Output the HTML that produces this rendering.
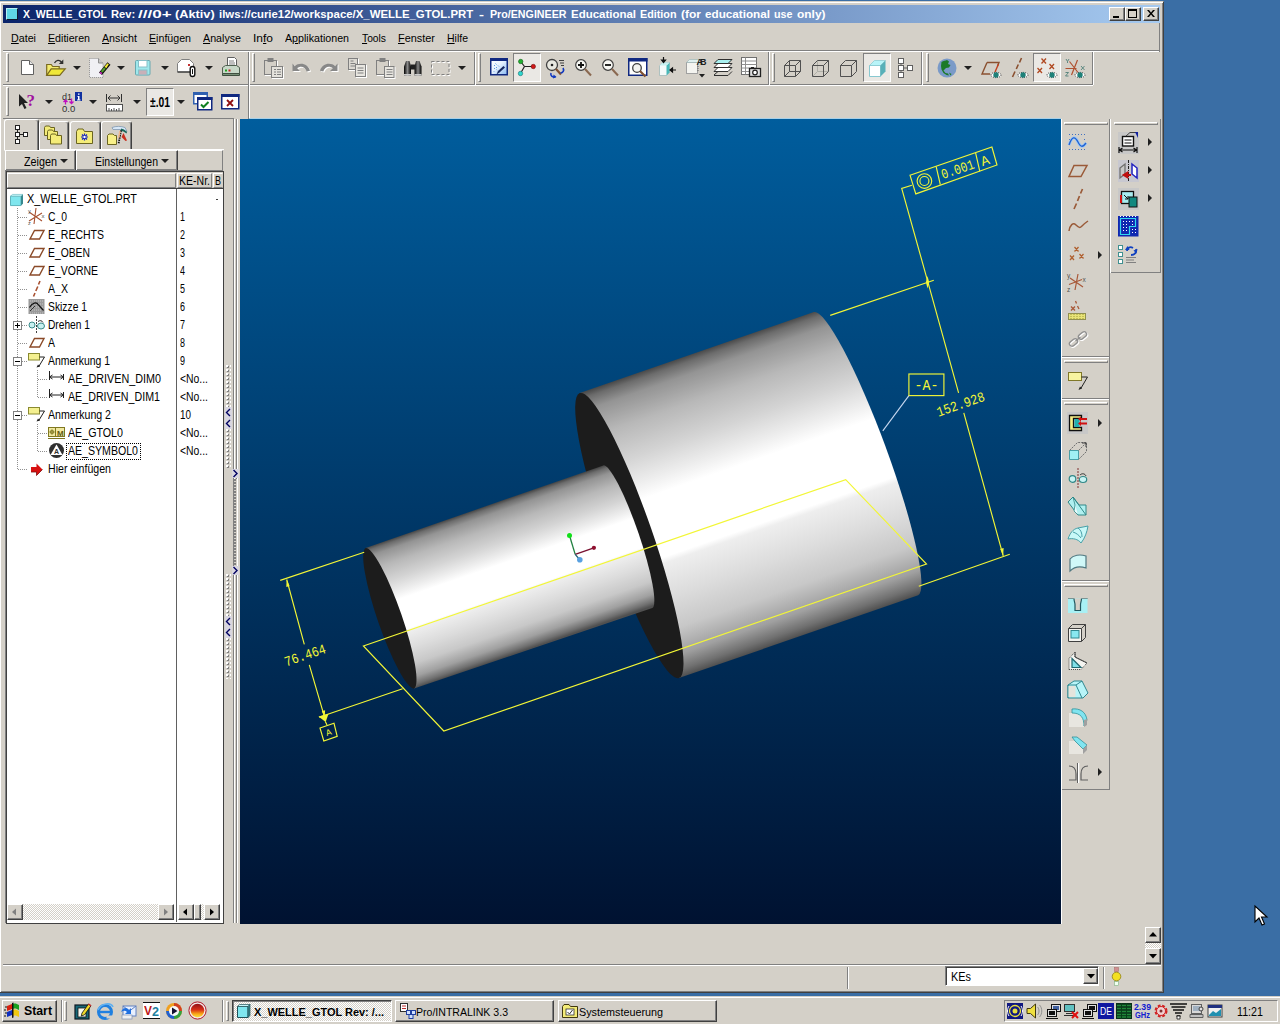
<!DOCTYPE html>
<html><head><meta charset="utf-8">
<style>
*{box-sizing:border-box;margin:0;padding:0}
html,body{width:1280px;height:1024px;overflow:hidden}
body{background:#3A6EA5;font-family:"Liberation Sans",sans-serif;font-size:11px;color:#000;position:relative}
.a{position:absolute}
.face{background:#D4D0C8}
.t{position:absolute;white-space:nowrap;line-height:14px;height:14px;transform-origin:0 50%}
.raised{border:1px solid;border-color:#fff #808080 #808080 #fff}
.sunken{border:1px solid;border-color:#808080 #fff #fff #808080}
.btn{position:absolute;background:#D4D0C8;border:1px solid;border-color:#fff #404040 #404040 #fff;box-shadow:inset -1px -1px 0 #808080}
.hl{position:absolute;height:2px;border-top:1px solid #808080;border-bottom:1px solid #fff}
.vl{position:absolute;width:2px;border-left:1px solid #808080;border-right:1px solid #fff}
.grip{position:absolute;width:3px;border:1px solid;border-color:#fff #808080 #808080 #fff}
.dd{position:absolute;width:0;height:0;border-left:4px solid transparent;border-right:4px solid transparent;border-top:4px solid #202020}
.rr{position:absolute;width:0;height:0;border-top:4px solid transparent;border-bottom:4px solid transparent;border-left:4px solid #202020}
svg{position:absolute;overflow:visible}
</style></head>
<body>
<!-- WINDOW FRAME -->
<div class="a face" style="left:-1px;top:1px;width:1165px;height:992px;border:1px solid;border-color:#D4D0C8 #404040 #404040 #D4D0C8;box-shadow:inset 1px 1px 0 #fff,inset -1px -1px 0 #808080"></div>
<!-- TITLE BAR -->
<div class="a" style="left:3px;top:5px;width:1157px;height:18px;background:linear-gradient(90deg,#0A246A 0%,#A6CAF0 100%)"></div>
<div class="a" style="left:6px;top:8px;width:12px;height:12px;background:#5ED6E6;border:1px solid;border-color:#B8F0F4 #10182C #10182C #B8F0F4"></div>
<span class="t" style="left: 22.8px; top: 5px; line-height: 18px; height: 18px; color: rgb(255, 255, 255); font-weight: bold; transform: scaleX(0.95);">X_WELLE_GTOL</span>
<span class="t" style="left: 110.8px; top: 5px; line-height: 18px; height: 18px; color: rgb(255, 255, 255); font-weight: bold; transform: scaleX(1.0149);">Rev:</span>
<span class="t" style="left: 138.4px; top: 5px; line-height: 18px; height: 18px; color: rgb(255, 255, 255); font-weight: bold; transform: scaleX(1.5471);">///0+</span>
<span class="t" style="left: 175.3px; top: 5px; line-height: 18px; height: 18px; color: rgb(255, 255, 255); font-weight: bold; transform: scaleX(1.1597);">(Aktiv)</span>
<span class="t" style="left: 218.8px; top: 5px; line-height: 18px; height: 18px; color: rgb(255, 255, 255); font-weight: bold; transform: scaleX(1.0352);">ilws://curie12/workspace/X_WELLE_GTOL.PRT</span>
<span class="t" style="left: 479px; top: 5px; line-height: 18px; height: 18px; color: rgb(255, 255, 255); font-weight: bold; transform: scaleX(1.3617);">-</span>
<span class="t" style="left: 490px; top: 5px; line-height: 18px; height: 18px; color: rgb(255, 255, 255); font-weight: bold; transform: scaleX(0.9701);">Pro/ENGINEER</span>
<span class="t" style="left: 571px; top: 5px; line-height: 18px; height: 18px; color: rgb(255, 255, 255); font-weight: bold; transform: scaleX(1.0426);">Educational</span>
<span class="t" style="left: 640px; top: 5px; line-height: 18px; height: 18px; color: rgb(255, 255, 255); font-weight: bold; transform: scaleX(0.979);">Edition</span>
<span class="t" style="left: 681px; top: 5px; line-height: 18px; height: 18px; color: rgb(255, 255, 255); font-weight: bold; transform: scaleX(1.0912);">(for</span>
<span class="t" style="left: 705px; top: 5px; line-height: 18px; height: 18px; color: rgb(255, 255, 255); font-weight: bold; transform: scaleX(1.0634);">educational</span>
<span class="t" style="left: 774px; top: 5px; line-height: 18px; height: 18px; color: rgb(255, 255, 255); font-weight: bold; transform: scaleX(0.9753);">use</span>
<span class="t" style="left: 796.5px; top: 5px; line-height: 18px; height: 18px; color: rgb(255, 255, 255); font-weight: bold; transform: scaleX(1.0844);">only)</span>

<!-- title buttons -->
<div class="btn" style="left:1109px;top:7px;width:16px;height:14px"><div class="a" style="left:3px;top:8px;width:6px;height:2px;background:#000"></div></div>
<div class="btn" style="left:1125px;top:7px;width:16px;height:14px"><div class="a" style="left:2px;top:1px;width:9px;height:9px;border:1px solid #000;border-top-width:2px"></div></div>
<div class="btn" style="left:1143px;top:7px;width:16px;height:14px"><svg style="left:3px;top:2px" width="8" height="7"><path d="M0 0h2l2 2.5 2-2.5h2l-3 3.5 3 3.5h-2l-2-2.5-2 2.5h-2l3-3.5z" fill="#000"></path></svg></div>
<!-- MENU BAR -->
<span class="t" style="left: 11px; top: 31px; transform: scaleX(0.9726);"><u>D</u>atei</span>
<span class="t" style="left: 48px; top: 31px; transform: scaleX(0.9673);"><u>E</u>ditieren</span>
<span class="t" style="left: 102px; top: 31px; transform: scaleX(0.9697);"><u>A</u>nsicht</span>
<span class="t" style="left: 149px; top: 31px; transform: scaleX(0.9669);"><u>E</u>infügen</span>
<span class="t" style="left: 203px; top: 31px; transform: scaleX(0.9709);"><u>A</u>nalyse</span>
<span class="t" style="left: 253px; top: 31px; transform: scaleX(1.0884);">In<u>f</u>o</span>
<span class="t" style="left: 285px; top: 31px; transform: scaleX(0.9688);">A<u>p</u>plikationen</span>
<span class="t" style="left: 362px; top: 31px; transform: scaleX(0.9343);"><u>T</u>ools</span>
<span class="t" style="left: 398px; top: 31px; transform: scaleX(0.9916);"><u>F</u>enster</span>
<span class="t" style="left: 447px; top: 31px; transform: scaleX(0.9539);"><u>H</u>ilfe</span>
<!-- toolbar frame lines -->
<div class="hl" style="left:3px;top:50px;width:1157px"></div>
<div class="a" style="left:1159px;top:23px;width:1px;height:29px;background:#808080"></div>
<div class="hl" style="left:3px;top:84px;width:1090px"></div>
<div class="a" style="left:3px;top:118px;width:231px;height:1px;background:#808080"></div>
<!-- TOOLBAR ROW 1 group 1 -->
<div class="grip" style="left:6px;top:53px;height:29px"></div>
<div class="vl" style="left:248px;top:52px;height:67px"></div>
<!-- new -->
<svg style="left:21px;top:60px" width="13" height="15"><path d="M.5 .5h8l4 4v10h-12z" fill="#fff" stroke="#606060"></path><path d="M8.5 .5v4h4" fill="#e8e8e8" stroke="#606060"></path></svg>
<!-- open -->
<svg style="left:46px;top:58px" width="20" height="19"><path d="M.7 17.300V6.500h4.500l1.500 2h6.500v3" fill="#F4EC70" stroke="#7A6A20" stroke-width="1.200"></path><path d="M.7 17.300l4.500-6.500h14l-5.500 6.500z" fill="#F0E838" stroke="#7A6A20" stroke-width="1.200"></path><path d="M8.500 5c1.500-3 5-3.500 7-.8" fill="none" stroke="#303030" stroke-width="1.300"></path><path d="M17.300 1.500v4.500h-4.500z" fill="#303030"></path></svg>
<div class="dd" style="left:73px;top:66px"></div>
<!-- pencil page -->
<svg style="left:88px;top:57px" width="23" height="22"><path d="M1.500 1.500h9l4.500 4.500v14.500h-13.500z" fill="#F0F0F4" stroke="#909090" stroke-dasharray="1 1"></path><path d="M10.500 1.500v4.500h4.500" fill="#C8C8C8" stroke="#909090"></path><path d="M21.500 7l-2-1.800-8.500 10.300 3 2.500 8.500-10.300z" fill="#101010"></path><path d="M20.800 7.300l-1.300-1.100-3 3.500 1.800 1.500z" fill="#F4EC30"></path><path d="M17.800 11.700l-1.700-1.400-3.200 3.900 1.700 1.400z" fill="#50A030"></path><path d="M14.300 16.100l-1.700-1.400-1.100 1.300 1.700 1.500z" fill="#D030C0"></path></svg>
<div class="dd" style="left:117px;top:66px"></div>
<!-- save -->
<svg style="left:135px;top:60px" width="16" height="16"><rect x=".5" y=".5" width="14.5" height="14.5" rx="1" fill="#9EE8EC" stroke="#68A8B0"></rect><rect x="3.5" y=".5" width="8.5" height="6.5" fill="#fff" stroke="#88C0C8"></rect><rect x="3.5" y="10" width="8.5" height="5" fill="#C8B0B8" stroke="#88C0C8"></rect></svg>
<div class="dd" style="left:161px;top:66px"></div>
<!-- envelope clip -->
<svg style="left:177px;top:58px" width="20" height="20"><path d="M.5 5.5l4-4h8l4 4v8.5h-16z" fill="#fff" stroke="#808080"></path><path d="M.5 14h16" stroke="#404040" stroke-width="1.4"></path><rect x="11" y="6" width="2" height="2" fill="#C03030"></rect><rect x="13.2" y="8.5" width="4.6" height="10" rx="2.3" fill="#fff" stroke="#101010" stroke-width="1.4"></rect><path d="M15.5 11v5" stroke="#101010"></path></svg>
<div class="dd" style="left:205px;top:66px"></div>
<!-- printer -->
<svg style="left:221px;top:57px" width="20" height="20"><path d="M6.5 .5h7l2 2v8h-9z" fill="#fff" stroke="#606060"></path><path d="M8 4h5M8 6h6M8 8h6" stroke="#808080"></path><path d="M1.500 10.500l3-2h11l3 2v6h-17z" fill="#C8D8C8" stroke="#506050"></path><path d="M1.500 16.5h17v2h-17z" fill="#789078" stroke="#405040"></path><rect x="4" y="12.500" width="2" height="2" fill="#20A020"></rect><rect x="7.500" y="12.500" width="2" height="2" fill="#C02020"></rect></svg>
<!-- ROW 2 -->
<div class="grip" style="left:6px;top:87px;height:29px"></div>
<svg style="left:18px;top:93px" width="19" height="17"><path d="M1 1v12.500l3-2.500 2.500 5 2-1-2.500-5h4z" fill="#202020"></path><text x="8.500" y="13" font-family="Liberation Serif" font-weight="bold" font-size="17" fill="#A010A0">?</text></svg>
<div class="dd" style="left:45px;top:100px"></div>
<svg style="left:61px;top:91px" width="22" height="22"><text x="1" y="8.500" font-size="9" font-family="Liberation Sans" fill="#303030">d1</text><text x="1" y="21" font-size="9.500" font-family="Liberation Sans" fill="#303030">0.0</text><path d="M4.500 13.500v-4M2.500 11l2-2 2 2" stroke="#C010C0" stroke-width="1.300" fill="none"></path><path d="M10.500 7.500v5M8.500 10.500l2 2 2-2" stroke="#C010C0" stroke-width="1.300" fill="none"></path><rect x="14" y="1" width="7" height="9" fill="#1030A0"></rect><path d="M17 2.500h1.500v1.300h-1.500zM16.500 5h2v3.500h1v1h-3.500v-1h1v-2.500h-.5z" fill="#fff"></path></svg>
<div class="dd" style="left:89px;top:100px"></div>
<svg style="left:105px;top:94px" width="19" height="18"><path d="M1.500 0v8M16.500 0v8M3 4h12M5.500 1.500l-2.500 2.500 2.500 2.500M12.500 1.500l2.500 2.500-2.500 2.500" stroke="#303030" fill="none"></path><rect x="1.500" y="10.500" width="16" height="6.500" fill="#fff" stroke="#505050"></rect><path d="M4 17v-3M6.500 17v-2M9 17v-3M11.500 17v-2M14 17v-3" stroke="#505050"></path></svg>
<div class="dd" style="left:133px;top:100px"></div>
<div class="a" style="left:146px;top:88px;width:28px;height:28px;border:1px solid;border-color:#808080 #fff #fff #808080;background:#EAE8E4"></div>
<span class="t" style="left: 150px; top: 95px; font-weight: bold; font-size: 14px; transform: scaleX(0.7365);">±.01</span>
<div class="dd" style="left:177px;top:100px"></div>
<svg style="left:193px;top:92px" width="20" height="19"><rect x=".75" y=".75" width="13.500" height="11" fill="#fff" stroke="#3060B0" stroke-width="1.500"></rect><rect x="0" y="0" width="15" height="3" fill="#3060B0"></rect><rect x="4.750" y="5.750" width="14" height="12" fill="#fff" stroke="#102880" stroke-width="1.500"></rect><rect x="4" y="5" width="15.500" height="3" fill="#102880"></rect><path d="M8 12.500l2.500 2.500 5-5" stroke="#108020" stroke-width="2" fill="none"></path></svg>
<svg style="left:221px;top:94px" width="19" height="16"><rect x=".75" y=".75" width="17" height="14" fill="#fff" stroke="#102880" stroke-width="1.500"></rect><rect x="0" y="0" width="18.500" height="3" fill="#102880"></rect><path d="M6 6l6 6M12 6l-6 6" stroke="#901010" stroke-width="1.800"></path></svg>
<!-- TOOLBAR ROW 1 group 2 (disabled) -->
<div class="grip" style="left:252px;top:53px;height:29px"></div>
<div class="vl" style="left:474px;top:52px;height:33px"></div>
<svg style="left:264px;top:58px" width="21" height="21"><g fill="#D4D0C8" stroke="#fff" transform="translate(1,1)"><rect x=".5" y="2.500" width="12" height="14"></rect><rect x="7.500" y="8.500" width="11" height="11"></rect></g><g fill="#D4D0C8" stroke="#808080"><rect x=".5" y="2.500" width="12" height="14"></rect><rect x="4" y=".5" width="5" height="3" fill="#808080"></rect><rect x="7.500" y="8.500" width="11" height="11" fill="#E4E2DC"></rect><path d="M10 11.500h2M13 11.500h4M10 14h2M13 14h4M10 16.500h2M13 16.500h4"></path></g></svg>
<svg style="left:291px;top:62px" width="21" height="14"><path d="M1.500 1.500v7.500h7.500l-2.800-2.800c3-2.600 8-2 9.500 3.300l3.300-.8c-2-7.300-10.500-8.800-15.200-4.500z" fill="#fff" transform="translate(1,1)"></path><path d="M1.500 1.500v7.500h7.500l-2.800-2.800c3-2.600 8-2 9.500 3.300l3.300-.8c-2-7.300-10.500-8.800-15.200-4.500z" fill="#888"></path></svg>
<svg style="left:319px;top:62px" width="21" height="14"><g transform="translate(20,0) scale(-1,1)"><path d="M1.500 1.500v7.500h7.500l-2.800-2.800c3-2.600 8-2 9.500 3.300l3.300-.8c-2-7.300-10.500-8.800-15.200-4.500z" fill="#fff" transform="translate(-1,1)"></path><path d="M1.500 1.500v7.500h7.500l-2.800-2.800c3-2.600 8-2 9.500 3.300l3.300-.8c-2-7.300-10.500-8.800-15.200-4.500z" fill="#888"></path></g></svg>
<svg style="left:348px;top:58px" width="20" height="21"><g transform="translate(1,1)" fill="#fff" stroke="#fff"><rect x=".5" y=".5" width="9" height="11"></rect><rect x="7.500" y="6.500" width="10" height="12"></rect></g><g fill="#DCD9D2" stroke="#808080"><rect x=".5" y=".5" width="9" height="11"></rect><path d="M2.500 3h3M2.500 5.500h5M2.500 8h5"></path><rect x="7.500" y="6.500" width="10" height="12" fill="#E8E6E0"></rect><path d="M9.500 10h6M9.500 12.500h6M9.500 15h6"></path></g></svg>
<svg style="left:376px;top:58px" width="20" height="21"><g transform="translate(1,1)" fill="#fff" stroke="#fff"><rect x=".5" y="2.500" width="12" height="14"></rect><rect x="8.500" y="8.500" width="9.500" height="11"></rect></g><g fill="#D4D0C8" stroke="#808080"><rect x=".5" y="2.500" width="12" height="14"></rect><rect x="4" y=".5" width="5" height="3" fill="#808080"></rect><rect x="8.500" y="8.500" width="9.500" height="11" fill="#E8E6E0"></rect><path d="M10.500 11.500h6M10.500 14h6M10.500 16.500h6"></path></g></svg>
<svg style="left:403px;top:60px" width="20" height="17"><defs><linearGradient id="bn" x1="0" x2="1"><stop offset="0" stop-color="#000"></stop><stop offset=".5" stop-color="#888"></stop><stop offset="1" stop-color="#000"></stop></linearGradient></defs><path d="M1 6.500l2-5.500h3.500l1.500 5.500v9h-7z" fill="url(#bn)"></path><path d="M11.500 6.500l1.500-5.500h3.500l2 5.500v9h-7z" fill="url(#bn)"></path><rect x="7.500" y="4.500" width="4.500" height="5" fill="#202020"></rect><rect x="1" y="14" width="7" height="1.500" fill="#ccc"></rect><rect x="11.500" y="14" width="7" height="1.500" fill="#ccc"></rect></svg>
<svg style="left:431px;top:61px" width="20" height="16"><rect x="1.500" y="1.500" width="17.500" height="13" fill="none" stroke="#fff" stroke-dasharray="3 2"></rect><rect x=".5" y=".5" width="17.500" height="13" fill="none" stroke="#808080" stroke-dasharray="3 2"></rect></svg>
<div class="dd" style="left:458px;top:66px"></div>
<!-- group 3 -->
<div class="grip" style="left:478px;top:53px;height:29px"></div>
<div class="vl" style="left:768px;top:52px;height:33px"></div>
<svg style="left:490px;top:58px" width="19" height="19"><defs><linearGradient id="rp" x1="0" y1="0" x2="1" y2="1"><stop offset="0" stop-color="#fff"></stop><stop offset=".45" stop-color="#E8F2FF"></stop><stop offset="1" stop-color="#88B8F0"></stop></linearGradient></defs><rect x=".75" y=".75" width="16.500" height="16" fill="url(#rp)" stroke="#102880" stroke-width="1.500"></rect><rect x="0" y="0" width="18" height="3" fill="#102880"></rect><path d="M6.500 16.500l1.500-3.500 5.500-5 1.500 1.500-5.500 5z" fill="#182860"></path><path d="M4 7l1 1M6 9l1 1M5.500 5.500l1 1M8 7.500l1 1M4 10l1 1M6.500 11.500l.7.700M3.500 13l.7.700" stroke="#5A98E0"></path></svg>
<div class="a" style="left:513px;top:53px;width:28px;height:29px;border:1px solid;border-color:#808080 #fff #fff #808080;background:#EAE8E4"></div>
<svg style="left:516px;top:56px" width="22" height="22"><path d="M8.500 10.500l-3.500-4.500M8.500 10.500h8M8.500 10.500l-3.500 6" stroke="#202020" stroke-width="1.200" fill="none"></path><circle cx="4.700" cy="5.500" r="2.200" fill="#20B030" stroke="#106018" stroke-width=".6"></circle><circle cx="17.300" cy="10.500" r="2.200" fill="#D01818" stroke="#701010" stroke-width=".6"></circle><circle cx="4.500" cy="17.500" r="2.200" fill="#30D8D0" stroke="#107070" stroke-width=".6"></circle></svg>
<svg style="left:545px;top:58px" width="22" height="21"><circle cx="7" cy="7" r="5.500" fill="#E8E8E0" stroke="#404040" stroke-width="1.300"></circle><circle cx="7" cy="7" r="1.300" fill="#202020"></circle><path d="M11 11l5 5.500" stroke="#805030" stroke-width="2.200"></path><path d="M14 2.500h5M15 5h4M16 7.500h3" stroke="#404040"></path><path d="M6 15c-1 3 2 5 4.500 3.500M18 10c1.500 2.500 0 5-2.500 5" stroke="#1038C0" stroke-width="1.600" fill="none"></path><path d="M8.500 16.500l3 2.500-3.500 1.500z" fill="#1038C0"></path></svg>
<svg style="left:574px;top:58px" width="19" height="19"><circle cx="7" cy="7" r="5.300" fill="#F8F8F4" stroke="#404040" stroke-width="1.200"></circle><path d="M4 7h6M7 4v6" stroke="#101010" stroke-width="1.800"></path><path d="M11 11l6 6.500" stroke="#8A6850" stroke-width="2"></path></svg>
<svg style="left:601px;top:58px" width="19" height="19"><circle cx="7" cy="7" r="5.300" fill="#F8F8F4" stroke="#404040" stroke-width="1.200"></circle><path d="M4 7h6" stroke="#101010" stroke-width="1.800"></path><path d="M11 11l6 6.500" stroke="#8A6850" stroke-width="2"></path></svg>
<svg style="left:628px;top:58px" width="20" height="19"><rect x=".75" y=".75" width="18" height="16.500" fill="#fff" stroke="#102880" stroke-width="1.500"></rect><rect x="0" y="0" width="19.500" height="3.500" fill="#102880"></rect><circle cx="9" cy="10" r="4.300" fill="#F4F4F0" stroke="#404040" stroke-width="1.300"></circle><path d="M12 13l5.500 5.500" stroke="#805030" stroke-width="2.200"></path></svg>
<svg style="left:657px;top:57px" width="20" height="21"><path d="M2.500 8.500l3-3h7v10l-3 3h-7z" fill="#F4FAFA" stroke="#A0B8B8" stroke-width=".8"></path><path d="M12.500 5.500v10l-3 3v-10z" fill="#48B8B8"></path><path d="M2.500 8.500l3-3h7l-3 3z" fill="#C8F0F0"></path><path d="M6.500 0v5M4.500 3l2 2.500 2-2.500zM19 13h-6M15.500 11l-2.500 2 2.500 2z" stroke="#101010" fill="#101010" stroke-width="1.200"></path></svg>
<svg style="left:685px;top:57px" width="22" height="21"><rect x="1.500" y="5.500" width="11" height="11" fill="#F4F4F0" stroke="#A0A0A0"></rect><path d="M1.500 5.500l3-3h11l-3 3z" fill="#E0F0F0" stroke="#A0B8B8" stroke-width=".7"></path><text x="11.500" y="8" font-size="9" font-weight="bold" font-family="Liberation Sans" fill="#202020" textLength="10">AB</text><path d="M13 9v6" stroke="#606060" stroke-dasharray="1 1"></path><path d="M14 17h6l-3 3.500z" fill="#202020"></path></svg>
<svg style="left:713px;top:58px" width="20" height="19"><path d="M1 13.500l4-4h14l-4 4z" fill="#fff" stroke="#303030"></path><path d="M1 9.500l4-4h14l-4 4z" fill="#fff" stroke="#303030"></path><path d="M1 5.500l4-4h14l-4 4z" fill="#A8F0F0" stroke="#303030"></path><path d="M1 17l4-3.500M15 17.500l4-4M1 17.500h14" stroke="#303030" fill="none"></path></svg>
<svg style="left:741px;top:57px" width="21" height="21"><rect x=".5" y=".5" width="15" height="17" fill="#fff" stroke="#707070"></rect><path d="M.5 4h15M.5 7.500h15M.5 11h15M.5 14.500h8M4.500 .5v17" stroke="#909090"></path><rect x="8.500" y="11.500" width="11" height="8" fill="#E0E0E0" stroke="#202020" stroke-width="1.300"></rect><rect x="10" y="10" width="3" height="2" fill="#202020"></rect><circle cx="14" cy="15.500" r="2.300" fill="#fff" stroke="#202020" stroke-width="1.200"></circle></svg>
<!-- group 4 -->
<div class="grip" style="left:772px;top:53px;height:29px"></div>
<div class="vl" style="left:921px;top:52px;height:33px"></div>
<svg style="left:784px;top:60px" width="18" height="17"><path d="M.5 5.500h11v11h-11zM5.500 .5h11v11h-11zM.5 5.500l5-5M11.500 5.500l5-5M.5 16.500l5-5M11.500 16.500l5-5" fill="none" stroke="#505050"></path></svg>
<svg style="left:812px;top:60px" width="18" height="17"><path d="M5.500 .5v11h11M5.500 11.500l-5 5" fill="none" stroke="#B0B0A8"></path><path d="M.5 5.500h11v11h-11zM.5 5.500l5-5h11v11l-5 5M11.500 5.500l5-5" fill="none" stroke="#505050"></path></svg>
<svg style="left:840px;top:60px" width="18" height="17"><path d="M.5 5.500h11v11h-11zM.5 5.500l5-5h11v11l-5 5M11.500 5.500l5-5" fill="none" stroke="#505050"></path></svg>
<div class="a" style="left:863px;top:53px;width:28px;height:29px;border:1px solid;border-color:#808080 #fff #fff #808080;background:#EAE8E4"></div>
<svg style="left:869px;top:60px" width="18" height="17"><path d="M.5 5.500h11v11h-11z" fill="#fff" stroke="#88C8D0"></path><path d="M.5 5.500l5-5h11l-5 5z" fill="#B8F4F8" stroke="#88C8D0" stroke-width=".7"></path><path d="M11.500 5.500l5-5v11l-5 5z" fill="#58B0B8"></path></svg>
<svg style="left:897px;top:57px" width="17" height="21"><path d="M4 6v10M6.500 11h5" stroke="#606060"></path><rect x="1.500" y="1.500" width="5" height="5" fill="#fff" stroke="#606060"></rect><rect x="1.500" y="8.500" width="5" height="5" fill="#fff" stroke="#606060"></rect><rect x="1.500" y="15.500" width="5" height="5" fill="#fff" stroke="#606060"></rect><rect x="10.500" y="8.500" width="5" height="5" fill="#fff" stroke="#606060"></rect></svg>
<!-- group 5 -->
<div class="grip" style="left:926px;top:53px;height:29px"></div>
<div class="vl" style="left:1092px;top:52px;height:33px"></div>
<svg style="left:937px;top:58px" width="20" height="20"><circle cx="10" cy="10" r="9.500" fill="#7A9AC8"></circle><path d="M4.500 4c2-1.500 4-1 5.500-2l2 1.500-1 2.500 2.500 1-1.500 2.500-3 .5-2.500 2.500 2 2.500 2.500.5 1 2-2.500-.5-3-2-2-3.500-.5-3.500z" fill="#1C7A28"></path><path d="M12 14.500l2.500 1.500-1 1.500z" fill="#1C7A28"></path></svg>
<div class="dd" style="left:964px;top:66px"></div>
<svg style="left:976px;top:52px" width="120" height="34">
<path d="M11 10.500h12l-1.500 3.500M11 10.500l-5 11.500h8" fill="none" stroke="#8A5030" stroke-width="1.400"></path><path d="M22.500 12l-3.500 8" stroke="#C04020" stroke-width="1.400"></path><ellipse cx="20" cy="23" rx="5" ry="2.600" fill="#fff" stroke="#202020" stroke-width=".9" stroke-dasharray="1 1"></ellipse><circle cx="20" cy="23" r="2.700" fill="#1E8078"></circle>
<path d="M45.500 6l-2 4.500M42.300 12.500l-2 4.500M39 19.500l-2.500 5.500" stroke="#8A5030" stroke-width="1.600"></path><ellipse cx="47" cy="23" rx="5" ry="2.600" fill="#fff" stroke="#202020" stroke-width=".9" stroke-dasharray="1 1"></ellipse><circle cx="47" cy="23" r="2.700" fill="#1E8078"></circle>
</svg>
<div class="a" style="left:1033px;top:53px;width:28px;height:29px;border:1px solid;border-color:#808080 #fff #fff #808080;background:#EAE8E4"></div>
<svg style="left:976px;top:52px" width="120" height="34">
<path d="M65.500 6.500l4.500 5M70 6.500l-4.500 5M73.500 12l4.500 5M78 12l-4.500 5M61.500 16l4.500 5M66 16l-4.500 5" stroke="#B04820" stroke-width="1.300"></path><ellipse cx="76" cy="23" rx="5" ry="2.600" fill="#fff" stroke="#202020" stroke-width=".9" stroke-dasharray="1 1"></ellipse><circle cx="76" cy="23" r="2.700" fill="#1E8078"></circle>
<path d="M101.500 8l-6 15M93.500 9.500l8.500 11M89.500 16.500h11" stroke="#B05030" stroke-width="1.200" fill="none"></path><path d="M90 7l1.500 2.500 1.500-2.500M91.500 9.500v1.500M89.500 20.500h3l-3 3.500h3M105 14l3.500 4M108.500 14l-3.500 4" stroke="#508078" stroke-width=".9" fill="none"></path><ellipse cx="104" cy="23" rx="5" ry="2.600" fill="#fff" stroke="#202020" stroke-width=".9" stroke-dasharray="1 1"></ellipse><circle cx="104" cy="23" r="2.700" fill="#1E8078"></circle>
</svg>
<!-- LEFT PANEL -->
<div class="a" style="left:4px;top:119px;width:35px;height:32px;border:1px solid;border-color:#fff #404040 #D4D0C8 #fff;border-radius:3px 3px 0 0;box-shadow:inset -1px 0 0 #808080"></div>
<div class="a" style="left:39px;top:121px;width:30px;height:29px;border:1px solid;border-color:#fff #404040 #fff #fff;border-radius:3px 3px 0 0;box-shadow:inset -1px 0 0 #808080"></div>
<div class="a" style="left:70px;top:121px;width:31px;height:29px;border:1px solid;border-color:#fff #404040 #fff #fff;border-radius:3px 3px 0 0;box-shadow:inset -1px 0 0 #808080"></div>
<div class="a" style="left:101px;top:121px;width:31px;height:29px;border:1px solid;border-color:#fff #404040 #fff #fff;border-radius:3px 3px 0 0;box-shadow:inset -1px 0 0 #808080"></div>
<div class="a" style="left:39px;top:149px;width:185px;height:1px;background:#fff"></div>
<svg style="left:14px;top:124px" width="16" height="21"><path d="M3.500 4v13M6 10.500h5" stroke="#202020"></path><rect x="1.500" y="1.500" width="4" height="4" fill="#fff" stroke="#202020"></rect><rect x="1.500" y="8.500" width="4" height="4" fill="#fff" stroke="#202020"></rect><rect x="1.500" y="15.500" width="4" height="4" fill="#fff" stroke="#202020"></rect><rect x="9.500" y="8.500" width="4" height="4" fill="#fff" stroke="#202020"></rect></svg>
<svg style="left:43px;top:125px" width="20" height="21"><g stroke="#6A6420" fill="#F4EC78"><path d="M1.500 2.500l1-1.500h4l1 1.500h4v8h-10z"></path><path d="M4.500 6.500l1-1.500h4l1 1.500h4v8h-10z"></path><path d="M7.500 10.500l1-1.500h4l1 1.500h5v8.500h-11z"></path></g></svg>
<svg style="left:76px;top:128px" width="18" height="17"><path d="M.5 3.500l1.500-2.500h5l1.500 2.500h8v12h-16z" fill="#F4EC78" stroke="#6A6420"></path><path d="M8.500 5.500v7M5 9h7M6 6.500l5 5M11 6.500l-5 5" stroke="#1020C0" stroke-width="1.200"></path><circle cx="8.500" cy="9" r="1.200" fill="#fff"></circle></svg>
<svg style="left:106px;top:124px" width="24" height="22"><path d="M1.500 20.500v-9l1.500-1.500h4l1.500 1.500h2v9z" fill="#F8F088" stroke="#6A6420"></path><path d="M6 3.500c4-1.500 9-1.500 13 0l2 4-2-.5-3-1.500h-9z" fill="#D8E8F8" stroke="#8098B0" stroke-width=".8"></path><path d="M15 4.500l3 1 3 2.500-.5 1.500-3-2-2.500-.5z" fill="#186858"></path><path d="M15 6.500l-2.500 13.500" stroke="#101010" stroke-width="1.800" stroke-dasharray="1.500 .8"></path><path d="M14 7l-1.500 7" stroke="#F0B890" stroke-width="1.500"></path><path d="M17.500 9l3.500 7.500-1.500.5-4-4z" fill="#C83020"></path></svg>
<div class="btn" style="left:5px;top:150px;width:71px;height:21px"></div>
<div class="btn" style="left:76px;top:150px;width:102px;height:21px"></div>
<div class="a" style="left:178px;top:150px;width:45px;height:20px;border-top:1px solid #fff;border-right:1px solid #808080"></div>
<span class="t" style="left: 24px; top: 155px; font-size: 12px; transform: scaleX(0.8991);">Zeigen</span><div class="dd" style="left:60px;top:159px"></div>
<span class="t" style="left: 95px; top: 155px; font-size: 12px; transform: scaleX(0.8742);">Einstellungen</span><div class="dd" style="left:161px;top:159px"></div>
<div class="a" style="left:6px;top:171px;width:218px;height:753px;background:#fff;border:1px solid #404040;box-shadow:-1px -1px 0 #808080"></div>
<div class="a face" style="left:7px;top:172px;width:216px;height:17px;border-bottom:1px solid #404040"></div>
<div class="a" style="left:7px;top:173px;width:169px;height:15px;border:1px solid;border-color:#fff #808080 #808080 #fff"></div>
<div class="a" style="left:177px;top:173px;width:35px;height:15px;border:1px solid;border-color:#fff #808080 #808080 #fff"></div>
<div class="a" style="left:213px;top:173px;width:10px;height:15px;border:1px solid;border-color:#fff #D4D0C8 #808080 #fff"></div>
<span class="t" style="left: 179px; top: 174px; font-size: 12px; transform: scaleX(0.8771);">KE-Nr.</span>
<span class="t" style="left: 215px; top: 174px; font-size: 12px; transform: scaleX(0.7485);">B</span>
<div class="a" style="left:176px;top:189px;width:1px;height:733px;background:#606060"></div>
<div class="a" style="left:17px;top:208px;width:1px;height:262px;background-image:linear-gradient(#909090 50%,transparent 50%);background-size:1px 2px"></div>
<div class="a" style="left:18px;top:217px;width:10px;height:1px;background-image:linear-gradient(90deg,#909090 50%,transparent 50%);background-size:2px 1px"></div>
<div class="a" style="left:18px;top:235px;width:10px;height:1px;background-image:linear-gradient(90deg,#909090 50%,transparent 50%);background-size:2px 1px"></div>
<div class="a" style="left:18px;top:253px;width:10px;height:1px;background-image:linear-gradient(90deg,#909090 50%,transparent 50%);background-size:2px 1px"></div>
<div class="a" style="left:18px;top:271px;width:10px;height:1px;background-image:linear-gradient(90deg,#909090 50%,transparent 50%);background-size:2px 1px"></div>
<div class="a" style="left:18px;top:289px;width:10px;height:1px;background-image:linear-gradient(90deg,#909090 50%,transparent 50%);background-size:2px 1px"></div>
<div class="a" style="left:18px;top:307px;width:10px;height:1px;background-image:linear-gradient(90deg,#909090 50%,transparent 50%);background-size:2px 1px"></div>
<div class="a" style="left:18px;top:325px;width:10px;height:1px;background-image:linear-gradient(90deg,#909090 50%,transparent 50%);background-size:2px 1px"></div>
<div class="a" style="left:18px;top:343px;width:10px;height:1px;background-image:linear-gradient(90deg,#909090 50%,transparent 50%);background-size:2px 1px"></div>
<div class="a" style="left:18px;top:361px;width:10px;height:1px;background-image:linear-gradient(90deg,#909090 50%,transparent 50%);background-size:2px 1px"></div>
<div class="a" style="left:18px;top:415px;width:10px;height:1px;background-image:linear-gradient(90deg,#909090 50%,transparent 50%);background-size:2px 1px"></div>
<div class="a" style="left:18px;top:469px;width:10px;height:1px;background-image:linear-gradient(90deg,#909090 50%,transparent 50%);background-size:2px 1px"></div>
<div class="a" style="left:37px;top:370px;width:1px;height:28px;background-image:linear-gradient(#909090 50%,transparent 50%);background-size:1px 2px"></div>
<div class="a" style="left:37px;top:424px;width:1px;height:28px;background-image:linear-gradient(#909090 50%,transparent 50%);background-size:1px 2px"></div>
<div class="a" style="left:38px;top:379px;width:10px;height:1px;background-image:linear-gradient(90deg,#909090 50%,transparent 50%);background-size:2px 1px"></div>
<div class="a" style="left:38px;top:397px;width:10px;height:1px;background-image:linear-gradient(90deg,#909090 50%,transparent 50%);background-size:2px 1px"></div>
<div class="a" style="left:38px;top:433px;width:10px;height:1px;background-image:linear-gradient(90deg,#909090 50%,transparent 50%);background-size:2px 1px"></div>
<div class="a" style="left:38px;top:451px;width:10px;height:1px;background-image:linear-gradient(90deg,#909090 50%,transparent 50%);background-size:2px 1px"></div>
<div class="a" style="left:13px;top:321px;width:9px;height:9px;background:#fff;border:1px solid #808080"><div class="a" style="left:1px;top:3px;width:5px;height:1px;background:#000"></div><div class="a" style="left:3px;top:1px;width:1px;height:5px;background:#000"></div></div>
<div class="a" style="left:13px;top:357px;width:9px;height:9px;background:#fff;border:1px solid #808080"><div class="a" style="left:1px;top:3px;width:5px;height:1px;background:#000"></div></div>
<div class="a" style="left:13px;top:411px;width:9px;height:9px;background:#fff;border:1px solid #808080"><div class="a" style="left:1px;top:3px;width:5px;height:1px;background:#000"></div></div>
<svg style="left:10px;top:194px" width="14" height="12" viewBox="0 0 14 14" preserveAspectRatio="none"><path d="M.5 2.500h10.500v11h-10.500z" fill="#7FE6EE" stroke="#58B0B8"></path><path d="M.5 2.500l2-2h10.500l-2 2z" fill="#C8F8FA" stroke="#58B0B8" stroke-width=".6"></path><path d="M11 2.500l2-2v11l-2 2z" fill="#38888E"></path></svg>
<span class="t" style="left: 27px; top: 192px; font-size: 12px; transform: scaleX(0.9045);">X_WELLE_GTOL.PRT</span>
<span class="t" style="left: 48px; top: 210px; font-size: 12px; transform: scaleX(0.863);">C_0</span>
<span class="t" style="left: 180px; top: 210px; font-size: 12px; transform: scaleX(0.7477);">1</span>
<svg style="left:28px;top:208px" width="17" height="17"><path d="M8 0l-2 16M1 4l13 9M1 13l13-8" stroke="#A85030" stroke-width="1.100"></path><text x="0" y="5" font-size="5.500" fill="#505050">y</text><text x="13.500" y="10" font-size="6" fill="#505050">x</text><text x="0" y="16.500" font-size="5.500" fill="#505050">z</text></svg>
<span class="t" style="left: 48px; top: 228px; font-size: 12px; transform: scaleX(0.8748);">E_RECHTS</span>
<span class="t" style="left: 180px; top: 228px; font-size: 12px; transform: scaleX(0.7477);">2</span>
<svg style="left:29px;top:226px" width="16" height="17"><path d="M5.500 4.500h9.500l-4.500 8.500h-9.500z" fill="none" stroke="#8A4A28" stroke-width="1.400"></path></svg>
<span class="t" style="left: 48px; top: 246px; font-size: 12px; transform: scaleX(0.8626);">E_OBEN</span>
<span class="t" style="left: 180px; top: 246px; font-size: 12px; transform: scaleX(0.7477);">3</span>
<svg style="left:29px;top:244px" width="16" height="17"><path d="M5.500 4.500h9.500l-4.500 8.500h-9.500z" fill="none" stroke="#8A4A28" stroke-width="1.400"></path></svg>
<span class="t" style="left: 48px; top: 264px; font-size: 12px; transform: scaleX(0.8717);">E_VORNE</span>
<span class="t" style="left: 180px; top: 264px; font-size: 12px; transform: scaleX(0.7477);">4</span>
<svg style="left:29px;top:262px" width="16" height="17"><path d="M5.500 4.500h9.500l-4.500 8.500h-9.500z" fill="none" stroke="#8A4A28" stroke-width="1.400"></path></svg>
<span class="t" style="left: 48px; top: 282px; font-size: 12px; transform: scaleX(0.8815);">A_X</span>
<span class="t" style="left: 180px; top: 282px; font-size: 12px; transform: scaleX(0.7477);">5</span>
<svg style="left:29px;top:280px" width="16" height="17"><path d="M11 1l-1.500 3.500M8.800 6.500l-2 4.500M6 13l-1.500 3.500" stroke="#A85030" stroke-width="1.600"></path></svg>
<span class="t" style="left: 48px; top: 300px; font-size: 12px; transform: scaleX(0.8598);">Skizze 1</span>
<span class="t" style="left: 180px; top: 300px; font-size: 12px; transform: scaleX(0.7477);">6</span>
<svg style="left:28px;top:298px" width="17" height="17"><rect x=".5" y="1" width="16" height="15" fill="#9A9A9A"></rect><path d="M0 3h17M0 6h17M0 9h17M0 12h17M0 15h17" stroke="#C8C8C8" stroke-dasharray="1 1"></path><path d="M1.500 9.500c3-5 7-6 9-2.500l5 5.500" stroke="#101010" fill="none" stroke-width="1.200"></path><path d="M2 13l5-5" stroke="#303030"></path></svg>
<span class="t" style="left: 48px; top: 318px; font-size: 12px; transform: scaleX(0.8506);">Drehen 1</span>
<span class="t" style="left: 180px; top: 318px; font-size: 12px; transform: scaleX(0.7477);">7</span>
<svg style="left:28px;top:316px" width="18" height="17"><path d="M8.500 0v17" stroke="#404040" stroke-dasharray="2 1"></path><ellipse cx="4" cy="9" rx="3" ry="3" fill="#C8F0F0" stroke="#3A8A8A"></ellipse><ellipse cx="13" cy="10" rx="3.500" ry="3" fill="#C8F0F0" stroke="#3A8A8A"></ellipse><path d="M10 5.500c2-1.500 4-1 5 1" stroke="#303030" fill="none"></path></svg>
<span class="t" style="left: 48px; top: 336px; font-size: 12px; transform: scaleX(0.8733);">A</span>
<span class="t" style="left: 180px; top: 336px; font-size: 12px; transform: scaleX(0.7477);">8</span>
<svg style="left:29px;top:334px" width="16" height="17"><path d="M5.500 4.500h9.500l-4.500 8.500h-9.500z" fill="none" stroke="#8A4A28" stroke-width="1.400"></path></svg>
<span class="t" style="left: 48px; top: 354px; font-size: 12px; transform: scaleX(0.8687);">Anmerkung 1</span>
<span class="t" style="left: 180px; top: 354px; font-size: 12px; transform: scaleX(0.7477);">9</span>
<svg style="left:27px;top:352px" width="19" height="17"><rect x="1.500" y="1.500" width="11" height="6.500" fill="#F4F090" stroke="#8A8A30"></rect><path d="M12.500 5h5l-6 10" stroke="#202020" fill="none"></path><path d="M9.500 15.500l3.500-1-2-2z" fill="#202020"></path></svg>
<span class="t" style="left: 68px; top: 372px; font-size: 12px; transform: scaleX(0.8996);">AE_DRIVEN_DIM0</span>
<span class="t" style="left: 180px; top: 372px; font-size: 12px; transform: scaleX(0.8653);">&lt;No...</span>
<svg style="left:48px;top:370px" width="17" height="17"><path d="M1.500 1v9M15.500 4v6M1.500 7h14M4.500 5l-3 2 3 2M12.500 5l3 2-3 2" stroke="#202020" fill="none"></path></svg>
<span class="t" style="left: 68px; top: 390px; font-size: 12px; transform: scaleX(0.89);">AE_DRIVEN_DIM1</span>
<span class="t" style="left: 180px; top: 390px; font-size: 12px; transform: scaleX(0.8653);">&lt;No...</span>
<svg style="left:48px;top:388px" width="17" height="17"><path d="M1.500 1v9M15.500 4v6M1.500 7h14M4.500 5l-3 2 3 2M12.500 5l3 2-3 2" stroke="#202020" fill="none"></path></svg>
<span class="t" style="left: 48px; top: 408px; font-size: 12px; transform: scaleX(0.8827);">Anmerkung 2</span>
<span class="t" style="left: 180px; top: 408px; font-size: 12px; transform: scaleX(0.8234);">10</span>
<svg style="left:27px;top:406px" width="19" height="17"><rect x="1.500" y="1.500" width="11" height="6.500" fill="#F4F090" stroke="#8A8A30"></rect><path d="M12.500 5h5l-6 10" stroke="#202020" fill="none"></path><path d="M9.500 15.500l3.500-1-2-2z" fill="#202020"></path></svg>
<span class="t" style="left: 68px; top: 426px; font-size: 12px; transform: scaleX(0.8898);">AE_GTOL0</span>
<span class="t" style="left: 180px; top: 426px; font-size: 12px; transform: scaleX(0.8653);">&lt;No...</span>
<svg style="left:48px;top:424px" width="17" height="17"><rect x=".5" y="3.500" width="16" height="9" fill="#F0E8A0" stroke="#807820"></rect><path d="M7.500 3.500v9M0 14.500h17" stroke="#807820"></path><path d="M1.500 8h5M4 5.500v5" stroke="#807820"></path><circle cx="4" cy="8" r="1.800" fill="none" stroke="#807820" stroke-width=".8"></circle><text x="9" y="11.500" font-size="8" font-weight="bold" fill="#605810">M</text></svg>
<span class="t" style="left: 68px; top: 444px; font-size: 12px; transform: scaleX(0.8819);">AE_SYMBOL0</span>
<span class="t" style="left: 180px; top: 444px; font-size: 12px; transform: scaleX(0.8653);">&lt;No...</span>
<svg style="left:48px;top:442px" width="17" height="17"><circle cx="8.500" cy="8.500" r="7.500" fill="#303030"></circle><path d="M8.500 2.500l6 10.500h-12z" fill="#fff"></path><text x="6" y="12" font-size="7" font-weight="bold" fill="#303030">A</text></svg>
<span class="t" style="left: 48px; top: 462px; font-size: 12px; transform: scaleX(0.8825);">Hier einfügen</span>
<svg style="left:31px;top:463px" width="12" height="13"><path d="M0 4h5.500v-3.500l6 6-6 6v-3.500h-5.500z" fill="#D81010"></path><path d="M0 9h5.500v3.500l6-6" fill="none" stroke="#801010" stroke-width=".8"></path></svg>
<div class="a" style="left:216px;top:199px;width:2px;height:1px;background:#404040"></div>
<div class="a" style="left:66px;top:443px;width:75px;height:17px;border:1px dotted #000"></div>
<div class="a" style="left:7px;top:904px;width:167px;height:16px;background-image:conic-gradient(#fff 25%,#D4D0C8 0 50%,#fff 0 75%,#D4D0C8 0);background-size:2px 2px"></div>
<div class="a" style="left:178px;top:904px;width:42px;height:16px;background-image:conic-gradient(#fff 25%,#D4D0C8 0 50%,#fff 0 75%,#D4D0C8 0);background-size:2px 2px"></div>
<div class="btn" style="left:7px;top:904px;width:16px;height:16px"><svg style="left:2px;top:0" width="10" height="14"><path d="M6 3.500v7l-4-3.500z" fill="#808080"></path></svg></div>
<div class="btn" style="left:158px;top:904px;width:16px;height:16px"><svg style="left:2px;top:0" width="10" height="14"><path d="M3 3.500v7l4-3.500z" fill="#808080"></path></svg></div>
<div class="btn" style="left:178px;top:904px;width:16px;height:16px"><svg style="left:2px;top:0" width="10" height="14"><path d="M6 3.500v7l-4-3.500z" fill="#000"></path></svg></div>
<div class="btn" style="left:204px;top:904px;width:16px;height:16px"><svg style="left:2px;top:0" width="10" height="14"><path d="M3 3.500v7l4-3.500z" fill="#000"></path></svg></div>
<div class="btn" style="left:194px;top:904px;width:7px;height:16px"></div>
<div class="a" style="left:233px;top:119px;width:1px;height:804px;background:#808080"></div>
<div class="a" style="left:234px;top:119px;width:1px;height:804px;background:#fff"></div>
<div class="a" style="left:236px;top:119px;width:1px;height:804px;background:#808080"></div>
<div class="a" style="left:237px;top:119px;width:1px;height:804px;background:#fff"></div>
<!-- SASH HANDLES -->
<div class="a" style="left:226px;top:365px;width:5px;height:104px;background-image:radial-gradient(circle at 1px 1px,#fff 0.9px,transparent 1px),radial-gradient(circle at 2px 2px,#808080 0.9px,transparent 1px);background-size:4px 4px"></div>
<div class="a" style="left:226px;top:574px;width:5px;height:105px;background-image:radial-gradient(circle at 1px 1px,#fff 0.9px,transparent 1px),radial-gradient(circle at 2px 2px,#808080 0.9px,transparent 1px);background-size:4px 4px"></div>
<div class="a" style="left:234px;top:479px;width:3px;height:87px;background-image:radial-gradient(circle at 1px 1px,#808080 0.9px,transparent 1px);background-size:3px 3px;background-color:#D4D0C8"></div>
<svg style="left:225px;top:407px" width="7" height="22"><rect x="0" y="0" width="7" height="22" fill="#D8D6E0"></rect><path d="M5 2l-3.500 3.500 3.500 3.500M5 13l-3.500 3.500 3.500 3.500" fill="none" stroke="#000060" stroke-width="1.400"></path></svg>
<svg style="left:225px;top:616px" width="7" height="22"><rect x="0" y="0" width="7" height="22" fill="#D8D6E0"></rect><path d="M5 2l-3.500 3.500 3.500 3.500M5 13l-3.500 3.500 3.500 3.500" fill="none" stroke="#000060" stroke-width="1.400"></path></svg>
<svg style="left:232px;top:469px" width="7" height="9"><rect x="0" y="0" width="7" height="9" fill="#D8D6E0"></rect><path d="M1.500 1l3.500 3.500-3.500 3.500" fill="none" stroke="#000060" stroke-width="1.400"></path></svg>
<svg style="left:232px;top:566px" width="7" height="9"><rect x="0" y="0" width="7" height="9" fill="#D8D6E0"></rect><path d="M1.500 1l3.500 3.500-3.500 3.500" fill="none" stroke="#000060" stroke-width="1.400"></path></svg>
<!-- VIEWPORT -->
<div class="a" style="left:240px;top:119px;width:821px;height:805px;background:linear-gradient(180deg,#005D9D 0%,#001231 100%)"></div>
<div class="a" style="left:249px;top:118px;width:812px;height:1px;background:#A8D0E8"></div>
<svg style="left:0;top:0" width="1280" height="1024" viewBox="0 0 1280 1024">
<defs><linearGradient id="gs" gradientUnits="userSpaceOnUse" x1="365.6" y1="548.0" x2="414.1" y2="688.4"><stop offset="0" stop-color="#484848"></stop><stop offset="0.02" stop-color="#6c6c6c"></stop><stop offset="0.06" stop-color="#949494"></stop><stop offset="0.15" stop-color="#b8b8b8"></stop><stop offset="0.26" stop-color="#d4d4d4"></stop><stop offset="0.34" stop-color="#ececec"></stop><stop offset="0.4" stop-color="#ffffff"></stop><stop offset="0.605" stop-color="#ffffff"></stop><stop offset="0.625" stop-color="#eeeeee"></stop><stop offset="0.735" stop-color="#dcdcdc"></stop><stop offset="0.84" stop-color="#c8c8c8"></stop><stop offset="0.925" stop-color="#a0a0a0"></stop><stop offset="0.975" stop-color="#707070"></stop><stop offset="1" stop-color="#505050"></stop></linearGradient><linearGradient id="gb" gradientUnits="userSpaceOnUse" x1="579.7" y1="393.1" x2="679.0" y2="678.1"><stop offset="0" stop-color="#484848"></stop><stop offset="0.02" stop-color="#6c6c6c"></stop><stop offset="0.06" stop-color="#949494"></stop><stop offset="0.15" stop-color="#b8b8b8"></stop><stop offset="0.26" stop-color="#d4d4d4"></stop><stop offset="0.34" stop-color="#ececec"></stop><stop offset="0.4" stop-color="#ffffff"></stop><stop offset="0.605" stop-color="#ffffff"></stop><stop offset="0.625" stop-color="#eeeeee"></stop><stop offset="0.735" stop-color="#dcdcdc"></stop><stop offset="0.84" stop-color="#c8c8c8"></stop><stop offset="0.925" stop-color="#a0a0a0"></stop><stop offset="0.975" stop-color="#707070"></stop><stop offset="1" stop-color="#505050"></stop></linearGradient></defs>
<path d="M579.7 393.1L813.9 312.1A150.9 21.1 69.80 0 1 918.1 595.3L679.0 678.1Z" fill="url(#gb)"></path>
<path d="M579.7 393.1A150.9 22.9 70.79 0 1 679.0 678.1A150.9 22.9 -109.21 0 1 579.7 393.1Z" fill="#1c1c1c"></path>
<path d="M365.6 548.0L603.4 465.4A75.4 11.5 71.07 0 1 652.3 608.0L414.1 688.4Z" fill="url(#gs)"></path>
<path d="M365.6 548.0A74.3 12.5 70.94 0 1 414.1 688.4A74.3 12.5 -109.06 0 1 365.6 548.0Z" fill="#1c1c1c"></path>
<g fill="none" stroke="#F2F636" stroke-width="1.15" stroke-linecap="butt">
<!-- datum plane A outline -->
<path d="M363.4 646L845.7 479.6L926.5 564L443.8 731Z"></path>
<!-- dim 76.464 -->
<path d="M280.2 580.4L364.2 552.3M319 717.3L402.6 688.7"></path>
<path d="M286.7 579.5L304.3 644.4M309.3 664.8L324.7 717.7"></path>
<path d="M325.3 721.4L327 725"></path>
<path d="M320 728L334 723.300L337.200 736.300L323.800 741Z"></path>
<!-- dim 152.928 -->
<path d="M830.2 315.4L933.8 280.3M918.8 586.3L1009.8 554.2"></path>
<path d="M911.9 185.3L901.7 188.4L927.5 280.6L958.6 392.8M963.8 412.8L1003.2 555.8"></path>
<!-- gtol frame -->
<path d="M910 175.200L991.900 147L997 165L915.800 193.900Z"></path>
<path d="M936.1 166.3L940.3 184.5M975.6 152.8L979.8 171.3"></path>
<circle cx="924.4" cy="181" r="7.300"></circle><circle cx="924.4" cy="181" r="4.500"></circle>
<!-- -A- box -->
<rect x="908.9" y="374" width="35" height="21.600"></rect>
</g>
<path d="M908.9 395.600L882.800 430.800" stroke="#C8D8F0" stroke-width="1.100" fill="none"></path>
<g fill="#F2F636">
<path d="M286.700 579.500l-.4 7.500 3.300-.9z"></path>
<path d="M318.500 716.500l10-2.700-2.800 8.200z"></path>
<path d="M324.700 717.700l.4-7.500-3.300.9z"></path>
<path d="M927.500 276l-1.600 6 1.600 6.400 1.600-6.400z"></path>
<path d="M1003.200 556l.4-8-3.400.9z"></path>
</g>
<g fill="#F2F636" font-family="Liberation Mono" font-size="14">
<text transform="translate(305,655) rotate(-18.500)" text-anchor="middle" y="4.800" textLength="43" lengthAdjust="spacingAndGlyphs">76.464</text>
<text transform="translate(960.5,404) rotate(-19)" text-anchor="middle" y="4.800" textLength="50" lengthAdjust="spacingAndGlyphs">152.928</text>
<text transform="translate(957.5,169) rotate(-19)" text-anchor="middle" y="4.800" textLength="34" lengthAdjust="spacingAndGlyphs">0.001</text>
<text transform="translate(984.8,160.300) rotate(-19)" text-anchor="middle" y="4.800">A</text>
<text transform="translate(328.700,732.300) rotate(-18.500)" text-anchor="middle" y="3" font-size="9">A</text>
<text x="926.4" y="389.800" text-anchor="middle" textLength="24" lengthAdjust="spacingAndGlyphs">-A-</text>
</g>
<!-- csys -->
<path d="M569.5 535.5L575.2 554.4" stroke="#208040" stroke-width="1.300"></path>
<path d="M575.2 554.4L593.900 547.800" stroke="#781030" stroke-width="1.300"></path>
<path d="M575.2 554.4L579.800 559.700" stroke="#206070" stroke-width="1.300"></path>
<circle cx="569.5" cy="535.5" r="2.500" fill="#10E018"></circle>
<circle cx="593.9" cy="547.8" r="2.100" fill="#901030"></circle>
<circle cx="579.8" cy="559.7" r="2.800" fill="#58A0E0"></circle>

</svg>
<!-- RIGHT TOOLBARS -->
<div class="a" style="left:1061px;top:119px;width:1px;height:805px;background:#fff"></div>
<div class="a" style="left:1109px;top:119px;width:1px;height:671px;background:#808080"></div>
<div class="a" style="left:1110px;top:119px;width:1px;height:154px;background:#fff"></div>
<div class="a" style="left:1160px;top:119px;width:1px;height:154px;background:#808080"></div>
<div class="a" style="left:1111px;top:272px;width:50px;height:1px;background:#808080"></div>
<div class="hl" style="left:1062px;top:356px;width:47px"></div>
<div class="hl" style="left:1062px;top:398px;width:47px"></div>
<div class="hl" style="left:1062px;top:580px;width:47px"></div>
<div class="a" style="left:1062px;top:789px;width:48px;height:1px;background:#808080"></div>
<div class="a" style="left:1064px;top:122px;width:44px;height:3px;border:1px solid;border-color:#fff #808080 #808080 #fff"></div>
<div class="a" style="left:1114px;top:122px;width:44px;height:3px;border:1px solid;border-color:#fff #808080 #808080 #fff"></div>
<div class="a" style="left:1064px;top:360px;width:44px;height:3px;border:1px solid;border-color:#fff #808080 #808080 #fff"></div>
<div class="a" style="left:1064px;top:402px;width:44px;height:3px;border:1px solid;border-color:#fff #808080 #808080 #fff"></div>
<div class="a" style="left:1064px;top:584px;width:44px;height:3px;border:1px solid;border-color:#fff #808080 #808080 #fff"></div>
<!-- col1 panel1 -->
<svg style="left:1068px;top:133px" width="20" height="19"><g fill="#4070C0"><rect x="1" y="1" width="1" height="1"></rect><rect x="4" y="1" width="1" height="1"></rect><rect x="7" y="1" width="1" height="1"></rect><rect x="10" y="1" width="1" height="1"></rect><rect x="13" y="1" width="1" height="1"></rect><rect x="16" y="1" width="1" height="1"></rect><rect x="1" y="16" width="1" height="1"></rect><rect x="4" y="16" width="1" height="1"></rect><rect x="7" y="16" width="1" height="1"></rect><rect x="10" y="16" width="1" height="1"></rect><rect x="13" y="16" width="1" height="1"></rect><rect x="16" y="16" width="1" height="1"></rect><rect x="1" y="6" width="1" height="1"></rect><rect x="16" y="6" width="1" height="1"></rect><rect x="1" y="11" width="1" height="1"></rect><rect x="16" y="11" width="1" height="1"></rect></g><path d="M1 12c3-9 6-9 9-3s5 5 8 1" fill="none" stroke="#9CC8F8" stroke-width="3"></path><path d="M1 12c3-9 6-9 9-3s5 5 8 1" fill="none" stroke="#2060D0" stroke-width="1.300"></path></svg>
<svg style="left:1068px;top:164px" width="20" height="14"><path d="M6 1.500h13l-6 11h-12z" fill="none" stroke="#9A5A38" stroke-width="1.500"></path></svg>
<svg style="left:1071px;top:188px" width="13" height="22"><path d="M11.500 1l-2 4.500M8.500 8l-2 5M5.500 15.500l-2.500 5.500" stroke="#9A5A38" stroke-width="1.700"></path></svg>
<svg style="left:1068px;top:219px" width="21" height="13"><path d="M1 12c1-6 4-9 7-6s4 3 6 1 3-3 6-5" fill="none" stroke="#9A5A38" stroke-width="1.500"></path></svg>
<svg style="left:1069px;top:246px" width="17" height="17"><path d="M5.500 1l4 4.500M9.500 1l-4 4.500M1 9.500l4 4.500M5 9.500l-4 4.500M10.500 8l4 4.500M14.500 8l-4 4.500" stroke="#B06030" stroke-width="1.300"></path></svg>
<div class="rr" style="left:1098px;top:251px"></div>
<svg style="left:1067px;top:272px" width="21" height="21"><path d="M11 2l-3 16M3 6l13 9M2 12.500l13-5" stroke="#A85838" stroke-width="1.200"></path><text x="0" y="6" font-size="6.500" fill="#505050">y</text><text x="15.500" y="10" font-size="6.500" fill="#505050">x</text><text x="0" y="20" font-size="6.500" fill="#505050">z</text></svg>
<svg style="left:1068px;top:300px" width="19" height="21"><path d="M7.500 1l1 2.500M9.500 6l1.500 3M3 6.500l4 4M7 6.500l-4 4" stroke="#A85838" stroke-width="1.300"></path><rect x=".5" y="13.500" width="17" height="6" fill="#E8E478" stroke="#909050"></rect><path d="M3 14v5M6 14v5M9 14v5M12 14v5M15 14v5" stroke="#A09838" stroke-dasharray="1 1"></path></svg>
<svg style="left:1068px;top:329px" width="21" height="21"><g fill="none" stroke="#fff" stroke-width="1.400" transform="translate(1,1)"><rect x="1" y="11" width="9" height="5" rx="2.500" transform="rotate(-38 5.500 13.500)"></rect><rect x="10" y="4" width="9" height="5" rx="2.500" transform="rotate(-38 14.500 6.500)"></rect></g><g fill="none" stroke="#909090" stroke-width="1.300"><rect x="1" y="11" width="9" height="5" rx="2.500" transform="rotate(-38 5.500 13.500)"></rect><rect x="10" y="4" width="9" height="5" rx="2.500" transform="rotate(-38 14.500 6.500)"></rect><path d="M7.500 12l5-4"></path></g></svg>
<!-- panel2 -->
<svg style="left:1067px;top:371px" width="22" height="21"><rect x="1.500" y="1.500" width="13" height="8" fill="#F8F4A0" stroke="#807828"></rect><path d="M14.500 6h6l-7 12" fill="none" stroke="#202020"></path><path d="M11.500 19l3.500-1.500-2-2z" fill="#202020"></path></svg>
<!-- panel3 -->
<div class="a" style="left:1067px;top:412px;width:21px;height:22px;background:#C8C8C8"></div>
<svg style="left:1068px;top:413px" width="20" height="20"><path d="M1.500 2.500h12v3h-8v9h8v3h-12z" fill="#F8F088" stroke="#101010" stroke-width="1.300"></path><rect x="6.500" y="6" width="5" height="8" fill="#20B0B0"></rect><path d="M12 6h7M12 10.500h7" stroke="#D01010" stroke-width="2.200"></path><path d="M13 3.500l-3 2.500 3 2.500zM13 8l-3 2.500 3 2.500z" fill="#D01010"></path></svg>
<div class="rr" style="left:1098px;top:419px"></div>
<svg style="left:1068px;top:441px" width="20" height="20"><path d="M1.500 9.500h9v9h-9z" fill="#A0F0F4" stroke="#48A0A8"></path><path d="M1.500 9.500l8-8h9v9l-8 8" fill="none" stroke="#707070" stroke-dasharray="2 1"></path><path d="M10.500 9.500l8-8" stroke="#707070" stroke-dasharray="2 1"></path><path d="M14 2h4v4" fill="none" stroke="#404040"></path></svg>
<svg style="left:1068px;top:468px" width="20" height="21"><path d="M10 0v20" stroke="#803030" stroke-dasharray="2 1"></path><circle cx="4.500" cy="11" r="3.300" fill="#C8F4F4" stroke="#308888" stroke-width="1.200"></circle><ellipse cx="15" cy="11.500" rx="3.700" ry="3" fill="#C8F4F4" stroke="#308888" stroke-width="1.200"></ellipse><path d="M12 7c2-2 5-1.500 6 1" fill="none" stroke="#303030"></path></svg>
<svg style="left:1067px;top:496px" width="22" height="21"><path d="M1 6l5-5 6 8h7v10h-8z" fill="#B0F0F0" stroke="#308888"></path><path d="M1 6l5-5 13 18" fill="none" stroke="#308888"></path><path d="M6 1l2 8-1 6 4 4" fill="#E8FCFC" stroke="#308888" stroke-width=".8"></path></svg>
<svg style="left:1067px;top:525px" width="23" height="20"><path d="M1 14c2-6 5-10 10-11l10-2c-1 6-3 12-7 17-3-4-8-5-13-4z" fill="#C8F8F8" stroke="#48A0A8"></path><path d="M6 7c3 1 6 3 8 6M11 3c3 2 4 5 4 9" fill="none" stroke="#48A0A8"></path></svg>
<svg style="left:1068px;top:553px" width="20" height="20"><path d="M2 18v-12c3-4 10-5 16-3v12c-6-2-12-1-16 3z" fill="#D0F8F8" stroke="#507880" stroke-width="1.200"></path></svg>
<!-- panel4 -->
<svg style="left:1068px;top:597px" width="20" height="17"><rect x="0" y="1" width="19.500" height="15" fill="#A8F0F4"></rect><path d="M0 1.500h6c0 3 1 4 1 6v6h5.500v-6c0-2 1-3 1-6h6" fill="#D4D0C8" stroke="#205860" stroke-width="1.200"></path><path d="M0 0h19.500v1.500h-19.500z" fill="#D4D0C8"></path></svg>
<svg style="left:1068px;top:624px" width="19" height="18"><path d="M.5 4.500h13v13h-13z" fill="#F4F4F0" stroke="#404040"></path><path d="M.5 4.500l4-4h13v13l-4 4" fill="none" stroke="#404040"></path><path d="M13.500 4.500l4-4" stroke="#404040"></path><rect x="3" y="6.500" width="8" height="7.500" fill="#88E8F0" stroke="#308890"></rect></svg>
<svg style="left:1067px;top:651px" width="22" height="21"><path d="M2 18.500v-11l6-6.500v5l12 6-6 6.500z" fill="#F4F4F0" stroke="#404040" stroke-dasharray="1 1"></path><path d="M5 16.500v-9l9 9z" fill="#80E0E8" stroke="#206870" stroke-width="1.200"></path><path d="M8 1v5l12 6" fill="none" stroke="#404040"></path></svg>
<svg style="left:1067px;top:679px" width="22" height="20"><path d="M1 6l6-4h8l6 12-5 5h-15z" fill="#B8F4F8" stroke="#308890"></path><path d="M1 6h8l6 13M9 6l6-4M1 6v13" fill="none" stroke="#308890"></path><path d="M1.500 7h7v11h-7z" fill="#E4E4DC"></path></svg>
<svg style="left:1068px;top:708px" width="20" height="20"><path d="M1 5h9c4 0 6 3 6 7v7h-15z" fill="#E8E6E0"></path><path d="M4 1c8-1 14 3 15 11l-3 6c0-8-3-13-12-13z" fill="#80E4F0" stroke="#309098" stroke-width=".8"></path><path d="M16 12l3-1v6l-3 2z" fill="#A0A0A0"></path></svg>
<svg style="left:1068px;top:736px" width="20" height="19"><path d="M1 5h6l8 7v6h-14z" fill="#E8E6E0"></path><path d="M4 1h5l10 8-4 4-8-8z" fill="#80E4F0" stroke="#309098" stroke-width=".8"></path><path d="M15 13l4-4v5l-4 4z" fill="#A0A0A0"></path></svg>
<svg style="left:1068px;top:763px" width="21" height="21"><path d="M1 3c5 0 7 3 7 8v6h-7M20 3c-5 0-7 3-7 8v6h7" fill="none" stroke="#606060" stroke-width="1.200"></path><path d="M10.500 0v20" stroke="#fff" stroke-width="1.500"></path><path d="M9.500 0v20" stroke="#606060"></path></svg>
<div class="rr" style="left:1098px;top:768px"></div>
<!-- col2 -->
<div class="a" style="left:1118px;top:132px;width:21px;height:22px;background:#C8C8C8"></div>
<svg style="left:1118px;top:132px" width="21" height="22"><rect x="4.500" y="4.500" width="11" height="9.500" fill="#fff" stroke="#101010" stroke-width="1.400"></rect><path d="M6.500 8h7M6.500 11h7" stroke="#101010" stroke-width="1.200"></path><path d="M8 4l4-3.500h6" fill="none" stroke="#404040"></path><path d="M17 0h3v6z" fill="#1020A0"></path><path d="M1 15v6M19 15v6M2 18h16M4.500 16l-3 2 3 2M15.500 16l3 2-3 2" fill="none" stroke="#101010" stroke-width="1.200"></path></svg>
<div class="rr" style="left:1148px;top:138px"></div>
<div class="a" style="left:1118px;top:160px;width:21px;height:22px;background:#C8C8D0"></div>
<svg style="left:1118px;top:160px" width="21" height="22"><path d="M2 8l5-4v10l-5 4z" fill="#C8C8C8" stroke="#707070" stroke-width="1.300"></path><path d="M10.500 0v21" stroke="#202020" stroke-dasharray="3 1 1 1"></path><path d="M14 4l5 4v10l-5-4z" fill="#fff" stroke="#2020C0" stroke-width="1.500"></path><path d="M13 15h-5M9.500 12.500l-4 2.500 4 2.500z" stroke="#C01010" stroke-width="1.800" fill="#C01010"></path></svg>
<div class="rr" style="left:1148px;top:166px"></div>
<div class="a" style="left:1118px;top:188px;width:21px;height:22px;background:#C8C8C8"></div>
<svg style="left:1118px;top:188px" width="21" height="22"><rect x="3.500" y="3.500" width="12" height="12" fill="#A8ECF0" stroke="#101010" stroke-width="1.300"></rect><path d="M3 7v8" stroke="#D01010" stroke-width="2"></path><rect x="11" y="9" width="8" height="10" fill="#108880" stroke="#101010"></rect><path d="M6 7l4 4M10 8v3h-3" stroke="#101010" fill="none"></path></svg>
<div class="rr" style="left:1148px;top:194px"></div>
<svg style="left:1118px;top:216px" width="21" height="21"><rect x="0" y="0" width="20.500" height="20.500" fill="#1028B0"></rect><path d="M2.500 2.500h15v8h-6v8h-9z" fill="none" stroke="#30D8F0" stroke-width="1.200"></path><g fill="#fff"><rect x="5" y="5" width="1" height="1"></rect><rect x="8" y="5" width="1" height="1"></rect><rect x="11" y="5" width="1" height="1"></rect><rect x="14" y="5" width="1" height="1"></rect><rect x="5" y="8" width="1" height="1"></rect><rect x="8" y="8" width="1" height="1"></rect><rect x="14" y="8" width="1" height="1"></rect><rect x="5" y="11" width="1" height="1"></rect><rect x="8" y="11" width="1" height="1"></rect><rect x="5" y="14" width="1" height="1"></rect><rect x="8" y="14" width="1" height="1"></rect><rect x="14" y="13" width="1" height="1"></rect><rect x="17" y="13" width="1" height="1"></rect><rect x="14" y="16" width="1" height="1"></rect><rect x="17" y="16" width="1" height="1"></rect><rect x="2" y="0" width="1" height="1"></rect><rect x="5" y="0" width="1" height="1"></rect><rect x="8" y="0" width="1" height="1"></rect><rect x="11" y="0" width="1" height="1"></rect><rect x="14" y="0" width="1" height="1"></rect><rect x="17" y="0" width="1" height="1"></rect></g></svg>
<svg style="left:1118px;top:244px" width="21" height="22"><rect x=".5" y="1.500" width="4" height="4" fill="#fff" stroke="#409090"></rect><rect x=".5" y="8.500" width="4" height="4" fill="#fff" stroke="#409090"></rect><rect x=".5" y="15.500" width="4" height="4" fill="#fff" stroke="#409090"></rect><path d="M9 7c0-3 3-5 6-3M18 5c1 3-1 6-5 6" fill="none" stroke="#1040C0" stroke-width="1.800"></path><path d="M7 6l2.500-4 2 4zM19.500 5l-1 4.500-3-3z" fill="#1040C0"></path><path d="M8 13.500h10M8 16h8M8 18.500h10" stroke="#808080"></path></svg>
<!-- STATUS AREA -->
<div class="btn" style="left:1145px;top:927px;width:16px;height:16px"><svg style="left:3px;top:4px" width="8" height="5"><path d="M0 4.500l4-4.500 4 4.500z" fill="#000"></path></svg></div>
<div class="a" style="left:1145px;top:943px;width:16px;height:5px;background-image:conic-gradient(#fff 25%,#D4D0C8 0 50%,#fff 0 75%,#D4D0C8 0);background-size:2px 2px"></div>
<div class="btn" style="left:1145px;top:948px;width:16px;height:16px"><svg style="left:3px;top:5px" width="8" height="5"><path d="M0 0l4 4.500 4-4.500z" fill="#000"></path></svg></div>
<div class="hl" style="left:3px;top:964px;width:1158px"></div>
<div class="vl" style="left:847px;top:967px;height:22px"></div>
<div class="a" style="left:945px;top:966px;width:154px;height:20px;background:#fff;border:1px solid;border-color:#808080 #fff #fff #808080;box-shadow:inset 1px 1px 0 #404040"></div>
<span class="t" style="left: 951px; top: 970px; font-size: 12px; transform: scaleX(0.9084);">KEs</span>
<div class="btn" style="left:1083px;top:968px;width:15px;height:16px"><svg style="left:3px;top:5px" width="8" height="5"><path d="M0 0l4 4.500 4-4.500z" fill="#000"></path></svg></div>
<div class="vl" style="left:1103px;top:967px;height:22px"></div>
<svg style="left:1111px;top:966px" width="11" height="21"><rect x="3.500" y="1.500" width="4" height="4" fill="#D09090" stroke="#B07070" stroke-width=".6"></rect><rect x="3.500" y="15.500" width="4" height="4" fill="#F0FFF0" stroke="#80B080" stroke-width=".6"></rect><circle cx="5.500" cy="10.500" r="4.300" fill="#F4E020" stroke="#908010" stroke-width=".8"></circle></svg>
<!-- TASKBAR -->
<div class="a face" style="left:0;top:996px;width:1280px;height:28px;border-top:1px solid #D4D0C8;box-shadow:inset 0 1px 0 #fff"></div>
<div class="btn" style="left:2px;top:1000px;width:55px;height:22px"></div>
<svg style="left:5px;top:1002px" width="17" height="18"><path d="M2 4l5-2v5l-5 2z" fill="#D82010"></path><path d="M2 10l5-2v5l-5 2z" fill="#1030C0"></path><path d="M8 2c2-1 4 0 6 1v5c-2-1-4-2-6-1z" fill="#18A020"></path><path d="M8 8c2-1 4 0 6 1v6c-2-1-4-2-6-1z" fill="#F0C810"></path><path d="M7 1l1.500-.5v15l-1.500.5z" fill="#101010"></path><path d="M1 4v2M0 7v2M1 10v2M0 13v2" stroke="#101010"></path></svg>
<span class="t" style="left: 24px; top: 1004px; font-weight: bold; font-size: 12px; transform: scaleX(1.024);">Start</span>
<div class="vl" style="left:61px;top:1000px;height:22px"></div>
<div class="grip" style="left:64px;top:1001px;height:20px"></div>
<!-- quick launch -->
<svg style="left:74px;top:1002px" width="18" height="18"><rect x="1" y="3" width="14" height="14" fill="#186878" stroke="#101820" stroke-width="1.200"></rect><rect x="4" y="6" width="8" height="9" fill="#F8F8F0" stroke="#101010" stroke-width=".8"></rect><path d="M8 11l6.500-9 2.500 1.800-6.500 9-3.200 1.200z" fill="#F0D828" stroke="#101010" stroke-width=".8"></path><path d="M14.500 2l2.500 1.800" stroke="#D03030" stroke-width="1.500"></path></svg>
<svg style="left:97px;top:1002px" width="17" height="18"><circle cx="8" cy="10" r="6.500" fill="none" stroke="#2080E0" stroke-width="3"></circle><path d="M3 10h11" stroke="#2080E0" stroke-width="2.400"></path><path d="M9.500 13.500h6v3h-6z" fill="#D4D0C8"></path><path d="M1 8c3-7 13-8 15-3" fill="none" stroke="#60B0F0" stroke-width="1.600"></path></svg>
<svg style="left:120px;top:1002px" width="17" height="18"><rect x="3" y="4" width="13" height="10" fill="#E8F0FF" stroke="#6080C0"></rect><path d="M3 4l6.500 5 6.500-5" fill="none" stroke="#6080C0"></path><path d="M1 10c2-5 6-5 8-2l2-2v6h-6l2-2c-2-2-4-1-6 0z" fill="#2070E0"></path><rect x="2" y="13" width="10" height="4" fill="#F0F0F0" stroke="#8090B0" stroke-width=".7"></rect></svg>
<div class="a" style="left:143px;top:1002px;width:17px;height:17px;background:#fff;border-top:1px solid #101010;border-bottom:1px solid #101010"></div>
<span class="t" style="left: 144px; top: 1004px; font-size: 13px; font-weight: bold; color: rgb(192, 24, 24); transform: scaleX(0.9225);">V</span>
<span class="t" style="left: 152px; top: 1005px; font-size: 12px; font-weight: bold; color: rgb(32, 128, 160); transform: scaleX(1.0467);">2</span>
<svg style="left:165px;top:1002px" width="18" height="18"><circle cx="9" cy="9" r="8" fill="#F0A020"></circle><path d="M9 9L9 1A8 8 0 0 1 17 9z" fill="#D04020"></path><path d="M9 9L17 9A8 8 0 0 1 9 17z" fill="#30A040"></path><path d="M9 9L9 17A8 8 0 0 1 1 9z" fill="#2060D0"></path><circle cx="9" cy="9" r="5" fill="#F8F8F8"></circle><path d="M7 5.500l5.500 3.500-5.500 3.500z" fill="#101030"></path></svg>
<svg style="left:188px;top:1001px" width="19" height="19"><defs><linearGradient id="fl" x1="0" y1="0" x2="0" y2="1"><stop offset="0" stop-color="#901018"></stop><stop offset=".45" stop-color="#D83018"></stop><stop offset=".75" stop-color="#F8A818"></stop><stop offset="1" stop-color="#F8E040"></stop></linearGradient></defs><circle cx="9.500" cy="9.500" r="8.600" fill="#F4E8E8" stroke="#B01828" stroke-width="1"></circle><circle cx="9.500" cy="9.500" r="6.800" fill="url(#fl)"></circle></svg>
<div class="vl" style="left:222px;top:1000px;height:22px"></div>
<div class="grip" style="left:226px;top:1001px;height:20px"></div>
<!-- task buttons -->
<div class="a" style="left:232px;top:1000px;width:160px;height:22px;border:1px solid;border-color:#404040 #fff #fff #404040;box-shadow:inset 1px 1px 0 #808080;background-color:#fff;background-image:conic-gradient(#fff 25%,#D4D0C8 0 50%,#fff 0 75%,#D4D0C8 0);background-size:2px 2px"></div>
<svg style="left:237px;top:1004px" width="14" height="14"><path d="M.5 2.500h10.500v11h-10.500z" fill="#7FE6EE" stroke="#205058"></path><path d="M.5 2.500l2-2h10.500l-2 2z" fill="#C8F8FA" stroke="#205058" stroke-width=".7"></path><path d="M11 2.500l2-2v11l-2 2z" fill="#38888E" stroke="#205058" stroke-width=".7"></path></svg>
<span class="t" style="left: 254px; top: 1005px; font-weight: bold; transform: scaleX(0.9969);">X_WELLE_GTOL Rev: /...</span>
<div class="btn" style="left:395px;top:1000px;width:159px;height:22px"></div>
<svg style="left:400px;top:1003px" width="16" height="16"><rect x=".5" y=".5" width="7" height="8" fill="#fff" stroke="#303030"></rect><path d="M2 3h4M2 5.500h4" stroke="#C03030"></path><rect x="6.500" y="7.500" width="4" height="4" fill="#D0E0FF" stroke="#2040A0"></rect><rect x="11.500" y="7.500" width="4" height="4" fill="#D0E0FF" stroke="#2040A0"></rect><rect x="9" y="11.500" width="4" height="4" fill="#D0E0FF" stroke="#2040A0"></rect></svg>
<span class="t" style="left: 416px; top: 1005px; transform: scaleX(0.9585);">Pro/INTRALINK 3.3</span>
<div class="btn" style="left:558px;top:1000px;width:159px;height:22px"></div>
<svg style="left:562px;top:1004px" width="16" height="14"><path d="M.5 13.500v-11l1.500-2h5l1.500 2h7v11z" fill="#F4EC78" stroke="#403810"></path><rect x="4" y="5" width="8" height="6" fill="#fff" stroke="#303030" stroke-width=".8"></rect><path d="M5.500 8l2 2 3-4" stroke="#303030" fill="none"></path></svg>
<span class="t" style="left: 579px; top: 1005px; transform: scaleX(0.9812);">Systemsteuerung</span>
<!-- tray -->
<div class="a" style="left:1004px;top:1000px;width:274px;height:22px;border:1px solid;border-color:#808080 #fff #fff #808080"></div>
<svg style="left:1007px;top:1003px" width="16" height="16"><rect width="16" height="16" fill="#101880"></rect><circle cx="8" cy="8" r="5.500" fill="none" stroke="#E8E040" stroke-width="1.300"></circle><circle cx="8" cy="8" r="2.500" fill="#E8E040"></circle><path d="M2 3c-2 3-2 7 0 10M14 3c2 3 2 7 0 10" stroke="#fff" fill="none"></path></svg>
<svg style="left:1026px;top:1003px" width="17" height="16"><path d="M1 5.500h3.500l5-4.500v14l-5-4.500h-3.500z" fill="#F0E040" stroke="#403810"></path><path d="M11.500 4c2 2 2 6 0 8M13.500 2c3 3 3 9 0 12" stroke="#909090" fill="none"></path></svg>
<svg style="left:1046px;top:1003px" width="16" height="16"><rect x="5.500" y="1.500" width="9" height="7" fill="#E0E0E0" stroke="#101010"></rect><rect x="7" y="3" width="6" height="4" fill="#4060A0"></rect><rect x="1.500" y="6.500" width="9" height="7" fill="#E0E0E0" stroke="#101010"></rect><rect x="3" y="8" width="6" height="4" fill="#101010"></rect><path d="M0 15.500h12" stroke="#101010"></path></svg>
<svg style="left:1063px;top:1003px" width="17" height="16"><rect x="1.500" y="1.500" width="10" height="7" fill="#60C0C0" stroke="#303030"></rect><path d="M3 10.500h8M1 12.500h11" stroke="#303030"></path><path d="M9 9l6 6M15 9l-6 6" stroke="#E01010" stroke-width="2"></path></svg>
<svg style="left:1082px;top:1003px" width="16" height="16"><rect x="5.500" y="1.500" width="9" height="7" fill="#E0E0E0" stroke="#101010"></rect><rect x="7" y="3" width="6" height="4" fill="#101010"></rect><rect x="1.500" y="6.500" width="9" height="7" fill="#E0E0E0" stroke="#101010"></rect><rect x="3" y="8" width="6" height="4" fill="#101010"></rect><path d="M0 15.500h12" stroke="#101010"></path></svg>
<div class="a" style="left:1098px;top:1003px;width:16px;height:16px;background:#1018A0"></div>
<span class="t" style="left: 1100px; top: 1004px; color: rgb(255, 255, 255); font-size: 11px; transform: scaleX(0.7853);">DE</span>
<svg style="left:1116px;top:1003px" width="16" height="16"><rect width="16" height="16" fill="#083018"></rect><path d="M1 2.500h14M1 5.500h14M1 8.500h14M1 11.500h14M1 14h14" stroke="#208838" stroke-width="1.600"></path><path d="M5.500 0v16M10.500 0v16" stroke="#084018"></path></svg>
<span class="t" style="left: 1134px; top: 1002px; color: rgb(16, 32, 208); font-weight: bold; font-size: 9px; line-height: 10px; height: 10px; transform: scaleX(0.9697);">2.39</span>
<span class="t" style="left: 1135px; top: 1010px; color: rgb(16, 32, 208); font-weight: bold; font-size: 9px; line-height: 10px; height: 10px; transform: scaleX(0.8333);">GHz</span>
<svg style="left:1153px;top:1003px" width="16" height="16"><circle cx="8" cy="8" r="5" fill="none" stroke="#D02020" stroke-width="3" stroke-dasharray="2.500 1.500"></circle><circle cx="8" cy="8" r="4.500" fill="#F0D0D0" stroke="#D02020"></circle><circle cx="8" cy="8" r="1.500" fill="#803030"></circle></svg>
<svg style="left:1170px;top:1003px" width="17" height="16"><path d="M0 1h17M1.500 4h14M3 7h11M5 10h7M6.500 13h4" stroke="#101010" stroke-width="1.600"></path><path d="M7 13h3v3h-3z" fill="#fff" stroke="#101010" stroke-width=".8"></path></svg>
<svg style="left:1189px;top:1003px" width="16" height="16"><rect x="2.500" y="1.500" width="10" height="9" fill="#D8D8D8" stroke="#606060"></rect><rect x="4" y="3" width="7" height="5" fill="#A0B0C0"></rect><path d="M1 14.500h13v-3h-13z" fill="#C0C0C0" stroke="#606060"></path><circle cx="12" cy="6" r="2" fill="#E0E0E0" stroke="#404040"></circle></svg>
<svg style="left:1207px;top:1003px" width="16" height="16"><rect x="1" y="2" width="14" height="12" fill="#F0F0F0" stroke="#404040"></rect><rect x="1" y="2" width="14" height="3" fill="#203080"></rect><path d="M2 12l4-4 3 2 5-4v7h-12z" fill="#2090B0"></path></svg>
<span class="t" style="left: 1237px; top: 1005px; font-size: 12px; transform: scaleX(0.8922);">11:21</span>
<!-- mouse cursor -->
<svg style="left:1254px;top:905px" width="14" height="22"><path d="M1 1v16l4-4 3 7 2.500-1-3-7h5.500z" fill="#fff" stroke="#000" stroke-width="1.100"></path></svg>


</body></html>
